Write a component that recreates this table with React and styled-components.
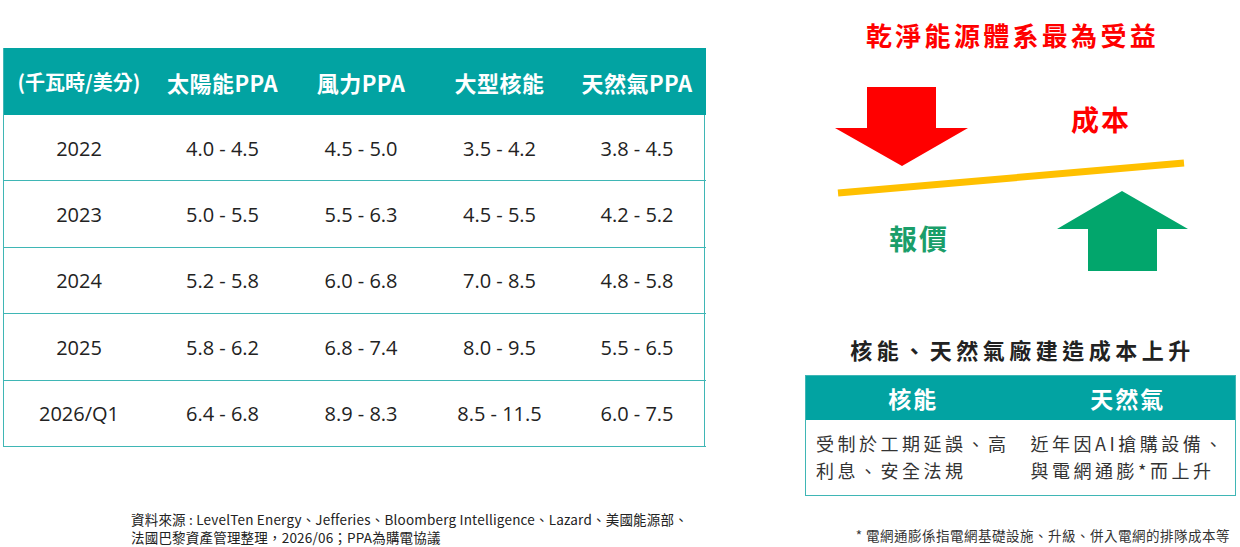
import React from "react";
import styled, { createGlobalStyle } from "styled-components";

const GlobalStyle = createGlobalStyle`
  html, body {
    margin: 0;
    padding: 0;
    background: #ffffff;
  }
  body {
    font-family: "Noto Sans CJK TC", "Noto Sans", sans-serif;
    color: #222;
  }
`;

const TEAL = "#02a3a2";
const LINE = "#3fb6b5";

const Page = styled.div`
  width: 1240px;
  height: 547px;
  display: flex;
  overflow: hidden;
`;

const LeftColumn = styled.div`
  width: 702px;
  margin-left: 3px;
  padding-top: 48px;
  display: flex;
  flex-direction: column;
`;

const Table = styled.div`
  display: grid;
  grid-template-columns: 150px 137px 140px 137px 138px;
  border-left: 1.5px solid ${LINE};
  border-right: 1.5px solid ${LINE};
  box-sizing: border-box;
`;

const HeadCell = styled.div`
  height: 67px;
  background: ${TEAL};
  color: #fff;
  font-family: "Noto Sans CJK TC", sans-serif;
  font-weight: 700;
  font-size: ${(p) => (p.$small ? "20px" : "22px")};
  letter-spacing: ${(p) => (p.$small ? "0" : "0.5px")};
  display: flex;
  align-items: center;
  justify-content: center;
  white-space: nowrap;
`;

const Cell = styled.div`
  height: 66.4px;
  box-sizing: border-box;
  border-bottom: 1.5px solid ${LINE};
  display: flex;
  align-items: center;
  justify-content: center;
  font-family: "Open Sans", sans-serif;
  font-size: 20px;
  color: #222;
  white-space: nowrap;
  padding-top: 1px;
`;

const Source = styled.div`
  margin-top: 63px;
  margin-left: 128px;
  font-size: 13.5px;
  line-height: 18px;
  color: #222;
  font-family: "Noto Sans CJK TC", sans-serif;
  letter-spacing: 0.2px;
`;

const SourceLine = styled.div`
  height: 18px;
  white-space: nowrap;
`;

const RightColumn = styled.div`
  width: 431px;
  margin-left: 100px;
  padding-top: 19px;
  display: flex;
  flex-direction: column;
`;

const Headline = styled.div`
  text-align: center;
  padding-right: 16px;
  color: #ff0000;
  font-weight: 700;
  font-size: 26px;
  line-height: 31px;
  letter-spacing: 3.3px;
`;

const Diagram = styled.div`
  position: relative;
  width: 431px;
  height: 240px;
`;

const DiagramLabel = styled.span`
  position: absolute;
  left: ${(p) => p.$x}px;
  top: ${(p) => p.$y}px;
  color: ${(p) => p.$color};
  font-weight: 700;
  font-size: 28px;
  line-height: 34px;
  letter-spacing: 2px;
  white-space: nowrap;
`;

const SubTitle = styled.div`
  margin-top: 45px;
  text-align: center;
  padding-left: 4px;
  font-weight: 700;
  font-size: 22px;
  line-height: 28px;
  letter-spacing: 4.5px;
  color: #222;
`;

const CostBox = styled.div`
  margin-top: 12px;
  border: 1.5px solid ${LINE};
  display: grid;
  grid-template-columns: 1fr 1fr;
`;

const BoxHead = styled.div`
  height: 44px;
  background: ${TEAL};
  color: #fff;
  font-weight: 700;
  font-size: 23px;
  letter-spacing: 2px;
  display: flex;
  align-items: center;
  justify-content: center;
`;

const BoxText = styled.div`
  height: 75px;
  box-sizing: border-box;
  padding: 10px 0 0 ${(p) => p.$pad}px;
  font-size: 18px;
  line-height: 27px;
  letter-spacing: 3.5px;
  color: #333;
  white-space: nowrap;
`;

const Footnote = styled.div`
  margin-top: 30px;
  text-align: right;
  padding-right: 6px;
  font-size: 13.5px;
  line-height: 18px;
  letter-spacing: 0.5px;
  color: #333;
`;

const headers = ["(千瓦時/美分)", "太陽能PPA", "風力PPA", "大型核能", "天然氣PPA"];

const rows = [
  ["2022", "4.0 - 4.5", "4.5 - 5.0", "3.5 - 4.2", "3.8 - 4.5"],
  ["2023", "5.0 - 5.5", "5.5 - 6.3", "4.5 - 5.5", "4.2 - 5.2"],
  ["2024", "5.2 - 5.8", "6.0 - 6.8", "7.0 - 8.5", "4.8 - 5.8"],
  ["2025", "5.8 - 6.2", "6.8 - 7.4", "8.0 - 9.5", "5.5 - 6.5"],
  ["2026/Q1", "6.4 - 6.8", "8.9 - 8.3", "8.5 - 11.5", "6.0 - 7.5"],
];

const Arrows = () => (
  <svg width="431" height="240" viewBox="0 0 431 240">
    <polygon
      points="62,37 131,37 131,78 163,78 97,116 30,78 62,78"
      fill="#ff0000"
    />
    <line
      x1="33"
      y1="143"
      x2="379"
      y2="113"
      stroke="#ffc000"
      strokeWidth="7"
    />
    <polygon
      points="317,141 383,179 352,179 352,221 283,221 283,179 252,179"
      fill="#02a66c"
    />
  </svg>
);

export default function App() {
  return (
    <Page>
      <GlobalStyle />
      <LeftColumn>
        <Table>
          {headers.map((h, i) => (
            <HeadCell key={h} $small={i === 0}>
              {h}
            </HeadCell>
          ))}
          {rows.map((r) =>
            r.map((v, i) => <Cell key={r[0] + i}>{v}</Cell>)
          )}
        </Table>
        <Source>
          <SourceLine>
            資料來源 : LevelTen Energy、Jefferies、Bloomberg Intelligence、Lazard、美國能源部、
          </SourceLine>
          <SourceLine>法國巴黎資產管理整理，2026/06；PPA為購電協議</SourceLine>
        </Source>
      </LeftColumn>

      <RightColumn>
        <Headline>乾淨能源體系最為受益</Headline>
        <Diagram>
          <Arrows />
          <DiagramLabel $x={266} $y={52} $color="#ff0000">
            成本
          </DiagramLabel>
          <DiagramLabel $x={84} $y={171} $color="#1a9e6a">
            報價
          </DiagramLabel>
        </Diagram>
        <SubTitle>核能、天然氣廠建造成本上升</SubTitle>
        <CostBox>
          <BoxHead>核能</BoxHead>
          <BoxHead>天然氣</BoxHead>
          <BoxText $pad={10}>
            受制於工期延誤、高
            <br />
            利息、安全法規
          </BoxText>
          <BoxText $pad={10}>
            近年因AI搶購設備、
            <br />
            與電網通膨*而上升
          </BoxText>
        </CostBox>
        <Footnote>* 電網通膨係指電網基礎設施、升級、併入電網的排隊成本等</Footnote>
      </RightColumn>
    </Page>
  );
}
